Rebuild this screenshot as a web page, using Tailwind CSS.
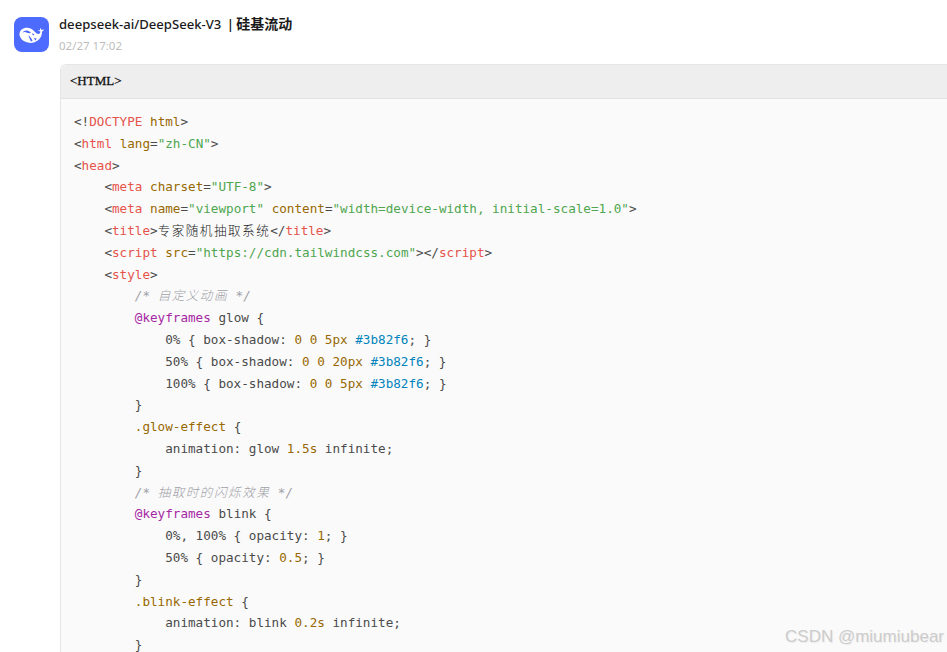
<!DOCTYPE html>
<html lang="zh-CN">
<head>
<meta charset="utf-8">
<script src="https://cdn.jsdelivr.net/npm/@tailwindcss/browser@4"></script>
</head>
<body class="bg-white">
<div class="relative w-[947px] h-[652px] overflow-hidden bg-white font-['Noto_Sans','Noto_Sans_CJK_SC',sans-serif]">
  <div class="flex gap-[10px] pl-[14px] pt-[17px]">
    <div class="w-[35px] h-[35px] shrink-0 rounded-lg bg-[#4d6bfe] flex items-center justify-center">
      <svg width="29" height="29" viewBox="0 0 29 29" fill="#fff">
        <path d="M2.500 13.500C3.200 9.500 7 7.200 11.500 8c3 .5 5 2.300 7 4.500 1 1.100 1.800 1.600 3 1.400 1.300-.2 2-1.300 1.800-2.700-.9.100-1.800-.2-2.500-.9.800-.2 1.500-.2 2.200.1-.1-.9 0-1.700.5-2.500.6.600 1 1.400 1.100 2.300.7-.5 1.500-.7 2.400-.6-.4 1-1.100 1.700-2 2.100.1 3.300-1.200 6.400-3.900 8.600-2.500 2-5.800 2.900-9 2.500-3-.3-5.800-1.500-7.700-3.700C3 16.700 2.200 15.300 2.500 13.500z"/>
        <path fill="#4d6bfe" d="M5.500 12.800c1-2 3-2.700 5-2.200 1.500.4 2.600 1.300 3.600 2.500-1.700.3-3.400-.2-4.900-.7-1.300-.4-2.600-.5-3.700.4zM11.500 15.200c1.500 1 3 2.900 4.100 5.800-.6.300-1.100.4-1.700.4-1-2.300-2-4.300-2.400-6.200zM15 13.500c.8-.3 1.500 0 2 .5.400.5.300 1.100-.2 1.300-.8 0-1.600-.9-1.800-1.800zM17 17.500c1 .8 1.800 1.100 2.800 1.100-.5.900-1.100 1.500-1.700 1.900-.4-1-.8-2-1.100-3z"/>
      </svg>
    </div>
    <div class="min-w-0 -mt-[2px]">
      <div class="text-[13.1px] leading-[18px] font-medium text-[#1a1a1a] whitespace-nowrap">deepseek-ai/DeepSeek-V3 <span class="font-semibold ml-[2px]">|</span> <span class="text-[14px] font-semibold -ml-[1px]">硅基流动</span></div>
      <div class="mt-[5px] text-[11.5px] leading-[16px] text-[#bdbdbd] whitespace-nowrap">02/27 17:02</div>
    </div>
  </div>
  <div class="ml-[60px] mt-[10px] w-[900px] rounded-tl-md border-l border-t border-[#e6e6e6] bg-[#fafafa]">
    <div class="h-[34px] flex items-center pl-[9px] pb-[2px] bg-[#eeeeee] border-b border-[#e2e2e2] rounded-tl-md font-['Liberation_Serif',serif] text-[13px] text-[#111] [-webkit-text-stroke:0.3px_#111]">&lt;HTML&gt;</div>
    <pre class="pl-[13px] pt-[12px] font-['DejaVu_Sans_Mono','Noto_Sans_CJK_SC',monospace] text-[12.64px] leading-[21.8px] text-[#4a4a4a]"><span>&lt;!</span><span class="text-[#e5534b]">DOCTYPE</span> <span class="text-[#986801]">html</span>&gt;
&lt;<span class="text-[#e5534b]">html</span> <span class="text-[#986801]">lang</span>=<span class="text-[#4ea64e]">"zh-CN"</span>&gt;
&lt;<span class="text-[#e5534b]">head</span>&gt;
    &lt;<span class="text-[#e5534b]">meta</span> <span class="text-[#986801]">charset</span>=<span class="text-[#4ea64e]">"UTF-8"</span>&gt;
    &lt;<span class="text-[#e5534b]">meta</span> <span class="text-[#986801]">name</span>=<span class="text-[#4ea64e]">"viewport"</span> <span class="text-[#986801]">content</span>=<span class="text-[#4ea64e]">"width=device-width, initial-scale=1.0"</span>&gt;
    &lt;<span class="text-[#e5534b]">title</span>&gt;<span class="font-light tracking-[1.45px] text-[#222]">专家随机抽取系统</span>&lt;/<span class="text-[#e5534b]">title</span>&gt;
    &lt;<span class="text-[#e5534b]">script</span> <span class="text-[#986801]">src</span>=<span class="text-[#4ea64e]">"https://cdn.tailwindcss.com"</span>&gt;&lt;/<span class="text-[#e5534b]">script</span>&gt;
    &lt;<span class="text-[#e5534b]">style</span>&gt;
        <span class="italic text-[#a0a1a7]">/* <span class="font-light tracking-[1.45px]">自定义动画</span> */</span>
        <span class="text-[#a626a4]">@keyframes</span> glow {
            0% { box-shadow: <span class="text-[#986801]">0 0 5px</span> <span class="text-[#0184bc]">#3b82f6</span>; }
            50% { box-shadow: <span class="text-[#986801]">0 0 20px</span> <span class="text-[#0184bc]">#3b82f6</span>; }
            100% { box-shadow: <span class="text-[#986801]">0 0 5px</span> <span class="text-[#0184bc]">#3b82f6</span>; }
        }
        <span class="text-[#986801]">.glow-effect</span> {
            animation: glow <span class="text-[#986801]">1.5s</span> infinite;
        }
        <span class="italic text-[#a0a1a7]">/* <span class="font-light tracking-[1.45px]">抽取时的闪烁效果</span> */</span>
        <span class="text-[#a626a4]">@keyframes</span> blink {
            0%, 100% { opacity: <span class="text-[#986801]">1</span>; }
            50% { opacity: <span class="text-[#986801]">0.5</span>; }
        }
        <span class="text-[#986801]">.blink-effect</span> {
            animation: blink <span class="text-[#986801]">0.2s</span> infinite;
        }</pre>
  </div>
  <div class="absolute right-[3px] top-[626px] font-['Liberation_Sans',sans-serif] text-[17px] leading-[22px] text-[#cccccc] [text-shadow:1px_1px_1px_rgba(0,0,0,0.06)] whitespace-nowrap">CSDN @miumiubear</div>
</div>
</body>
</html>
